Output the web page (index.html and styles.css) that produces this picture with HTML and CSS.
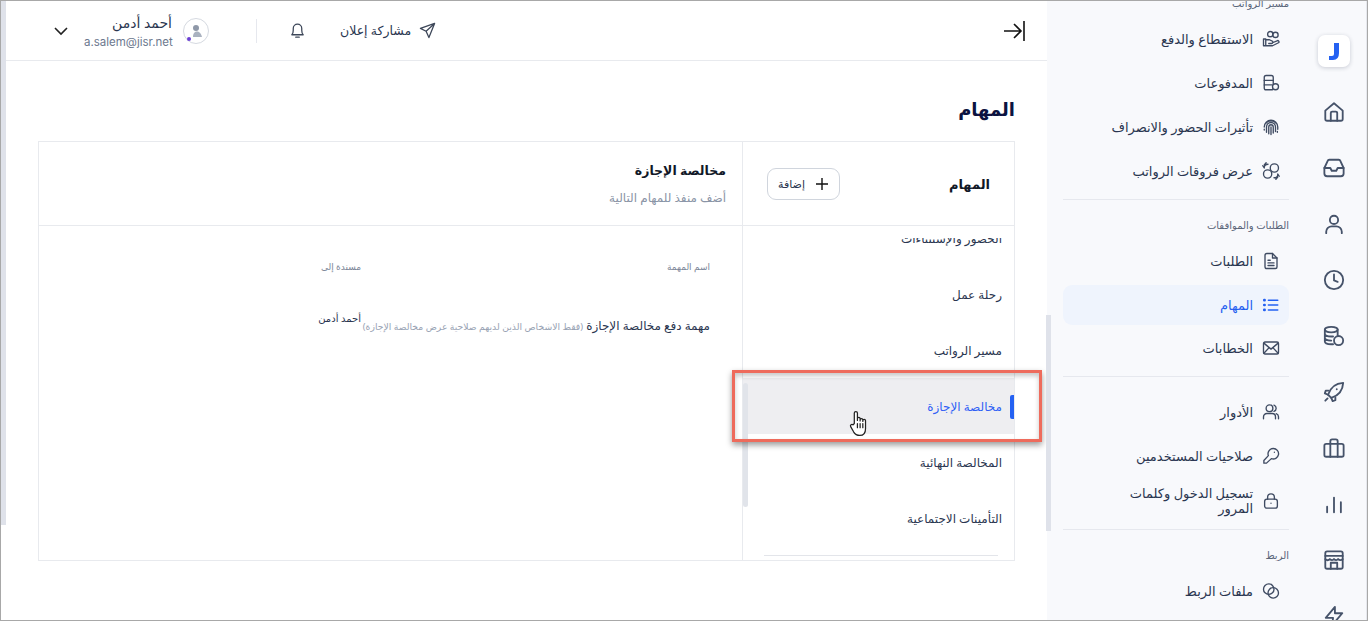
FILE: index.html
```html
<!DOCTYPE html>
<html lang="ar" dir="rtl">
<head>
  <meta charset="UTF-8" />
  <title>المهام</title>
  <link rel="stylesheet" href="styles.css">
</head>
<body>
  <div class="page">

    <!-- Icon rail -->
    <aside class="rail">
      <div class="logo">
        <svg width="10" height="17" viewBox="0 0 10 17"><path d="M5 0h5v10q0 7-6 7H0v-4h3q2 0 2-2z" fill="#2461f2"/></svg>
      </div>
      <svg class="rail-icon" viewBox="0 0 24 24"><path d="M2.500 10.500 12 2.500l9.500 8v9a2 2 0 0 1-2 2h-15a2 2 0 0 1-2-2z"/><path d="M8.500 21.500V13a1.500 1.500 0 0 1 1.500-1.500h4a1.500 1.500 0 0 1 1.500 1.500v8.500"/></svg>
      <svg class="rail-icon" viewBox="0 0 24 24"><path d="M1.500 12 5 4.500a2 2 0 0 1 2-1.500h10a2 2 0 0 1 2 1.500l3.500 7.500v6a3 3 0 0 1-3 3h-15a3 3 0 0 1-3-3z"/><path d="M1.500 12H8l1.500 3h5L16 12h6.500"/></svg>
      <svg class="rail-icon" viewBox="0 0 24 24"><circle cx="12" cy="7.500" r="4.500"/><path d="M3.500 22v-1.500a6 6 0 0 1 6-6h5a6 6 0 0 1 6 6V22"/></svg>
      <svg class="rail-icon" viewBox="0 0 24 24"><circle cx="12" cy="12" r="10"/><path d="M12 6v6.500l4 1.500"/></svg>
      <svg class="rail-icon" viewBox="0 0 24 24"><ellipse cx="9" cy="5" rx="7" ry="3"/><path d="M2 5v13c0 1.700 3 3 7 3h2M2 9.500c0 1.700 3 3 7 3h2M2 14c0 1.700 3 3 7 3M16 5v6"/><circle cx="17" cy="17" r="5"/></svg>
      <svg class="rail-icon" viewBox="0 0 24 24"><path d="M9 18.500 5.500 15c2-6 7-12.500 16.500-13-.5 9.500-7 14.500-13 16.500z"/><path d="M6 10.500H3l-1 3 3.500 1.500M13.500 18v3l-3 1-1.500-3.500M5 19l-2.500 2.500M15 9h.01"/></svg>
      <svg class="rail-icon" viewBox="0 0 24 24"><rect x="1.500" y="7.500" width="21" height="14" rx="2"/><path d="M8 21.500V4.500a2 2 0 0 1 2-2h4a2 2 0 0 1 2 2v17"/></svg>
      <svg class="rail-icon" viewBox="0 0 24 24"><path d="M4.500 15v6M12 5v16M19.500 10v11"/></svg>
      <svg class="rail-icon" viewBox="0 0 24 24"><rect x="2.500" y="2.500" width="19" height="19" rx="2"/><path d="M2.500 7.500h19M2.500 11c1.500 1.500 3.500 1.500 5 0 1.500 1.500 3.500 1.500 4.500 0 1.500 1.500 3.500 1.500 4.500 0 1.500 1.500 3.500 1.500 5 0M8.500 21.500V15h7v6.500"/></svg>
      <svg class="rail-icon" viewBox="0 0 24 24"><path d="M13 2 3 14h8l-1 8 11-13h-8z"/></svg>
    </aside>

    <!-- Section sidebar -->
    <nav class="sidebar">
      <div class="side-list">
        <div class="side-label">مسير الرواتب</div>
        <a class="side-item">
          <svg viewBox="0 0 24 24"><circle cx="11" cy="5.500" r="3.500"/><circle cx="18" cy="6.500" r="3.500"/><path d="M2 12h3v9H2zM5 13h5l4 2a1.800 1.800 0 0 1-1 3H9M14 17l6-2.500a1.600 1.600 0 0 1 2 2.500l-8 4H5"/></svg>
          <span>الاستقطاع والدفع</span>
        </a>
        <a class="side-item">
          <svg viewBox="0 0 24 24"><rect x="3" y="2" width="12" height="19" rx="2.500"/><path d="M3 8.500h12M3 14.500h10"/><circle cx="18" cy="17" r="4" fill="#f8f9fc"/></svg>
          <span>المدفوعات</span>
        </a>
        <a class="side-item">
          <svg viewBox="0 0 24 24"><path d="M5 7a9 9 0 0 1 14 0M3 12a9 9 0 0 1 18 0v3M6 19v-7a6 6 0 0 1 12 0v6M9 21v-9a3 3 0 0 1 6 0v8M12 12v10M3 15v1M20.500 18v1"/></svg>
          <span>تأثيرات الحضور والانصراف</span>
        </a>
        <a class="side-item">
          <svg viewBox="0 0 24 24"><circle cx="7.500" cy="16" r="5.500"/><circle cx="16.500" cy="8" r="5.500"/><path d="M3 7.500C3 4.500 5 3 8 3M5.500 1 3 4M1 5l2 3M21 16.500c0 3-2 4.500-5 4.500M18.500 23l2.500-3M23 19l-2-3"/></svg>
          <span>عرض فروقات الرواتب</span>
        </a>
        <div class="side-rule"></div>
        <div class="side-label">الطلبات والموافقات</div>
        <a class="side-item">
          <svg viewBox="0 0 24 24"><path d="M4 4.500A2.500 2.500 0 0 1 6.500 2H14l6 6v12a2 2 0 0 1-2 2H6.500A2.500 2.500 0 0 1 4 19.500z"/><path d="M14 2v6h6M8 11h3M8 14.500h8M8 18h8"/></svg>
          <span>الطلبات</span>
        </a>
        <a class="side-item active">
          <svg viewBox="0 0 24 24"><path d="M8.500 5.500H21M8.500 12H21M8.500 18.500H21"/><path class="dots" d="M3 5.500h.5M3 12h.5M3 18.500h.5"/></svg>
          <span>المهام</span>
        </a>
        <a class="side-item">
          <svg viewBox="0 0 24 24"><rect x="2" y="4" width="20" height="16" rx="2"/><path d="m2.500 5.500 9.500 8 9.500-8M2.500 19l7-7.500M21.500 19l-7-7.500"/></svg>
          <span>الخطابات</span>
        </a>
        <div class="side-rule"></div>
        <a class="side-item group-start">
          <svg viewBox="0 0 24 24"><circle cx="10" cy="7" r="4.500"/><path d="M2 21v-2.500A4.500 4.500 0 0 1 6.500 14h7a4.500 4.500 0 0 1 4.500 4.500V21M16 2.800a4.500 4.500 0 0 1 0 8.400M19 14.200a4.500 4.500 0 0 1 3 4.300V21"/></svg>
          <span>الأدوار</span>
        </a>
        <a class="side-item">
          <svg viewBox="0 0 24 24"><path d="M15 2a7 7 0 0 0-6.500 9.500L2.500 18v3.500H6l6.500-6A7 7 0 1 0 15 2z"/><path d="M16.500 7h.01"/></svg>
          <span>صلاحيات المستخدمين</span>
        </a>
        <a class="side-item two-line">
          <svg viewBox="0 0 24 24"><rect x="3.500" y="9.500" width="17" height="12" rx="3"/><path d="M7.500 9.500V7a4.500 4.500 0 0 1 9 0v2.500M12 15h.01"/></svg>
          <span>تسجيل الدخول وكلمات المرور</span>
        </a>
        <div class="side-rule"></div>
        <div class="side-label">الربط</div>
        <a class="side-item">
          <svg viewBox="0 0 24 24"><circle cx="9" cy="9.500" r="7"/><circle cx="15" cy="14.500" r="7"/></svg>
          <span>ملفات الربط</span>
        </a>
      </div>
    </nav>

    <!-- Main column -->
    <main class="main">
      <div class="main-scrollbar"></div>
      <header class="topbar">
        <svg class="collapse" width="22" height="22" viewBox="0 0 22 22"><path d="M1 11h16M11 4l7 7-7 7M21 1v20"/></svg>
        <div class="top-actions">
          <a class="share">
            <svg width="17" height="17" viewBox="0 0 24 24"><path d="M22 2 2 9l8 4 4 9zM22 2 10 13"/></svg>
            <span>مشاركة إعلان</span>
          </a>
          <svg class="bell" width="17" height="17" viewBox="0 0 24 24"><path d="M4 18c1.500-1.500 2-3 2-6.500V9a6 6 0 0 1 12 0v2.500c0 3.500.5 5 2 6.500zM9.500 21.500h5"/></svg>
          <div class="top-rule"></div>
          <div class="avatar">
            <svg width="26" height="26" viewBox="0 0 26 26"><circle cx="13" cy="13" r="12.500" fill="#fff" stroke="#d5d9e0"/><circle cx="13" cy="10" r="3" fill="#8f98a8"/><path d="M10 19c0-4 2-5.500 4-5.500s4 1.500 5 5.500z" fill="#aab2c0"/><circle cx="6" cy="21" r="2" fill="#6b3fd4"/></svg>
          </div>
          <div class="user">
            <div class="user-name">أحمد أدمن</div>
            <div class="user-mail">a.salem@jisr.net</div>
          </div>
          <svg class="chev" width="16" height="16" viewBox="0 0 16 16"><path d="m2 5 6 6 6-6"/></svg>
        </div>
      </header>

      <div class="content">
        <h1>المهام</h1>
        <section class="card">
          <div class="tasks-col">
            <div class="tasks-head">
              <h2>المهام</h2>
              <button class="add-btn">
                <svg width="14" height="14" viewBox="0 0 14 14"><path d="M7 1v12M1 7h12"/></svg>
                <span>إضافة</span>
              </button>
            </div>
            <div class="tasks-body">
              <ul class="tasks-list">
                <li>الحضور والإستثناءات</li>
                <li>رحلة عمل</li>
                <li>مسير الرواتب</li>
                <li class="selected">مخالصة الإجازة</li>
                <li>المخالصة النهائية</li>
                <li>التأمينات الاجتماعية</li>
              </ul>
              <div class="tasks-rule"></div>
            </div>
            <div class="list-scrollbar"></div>
          </div>

          <div class="detail-col">
            <div class="detail-head">
              <h3>مخالصة الإجازة</h3>
              <p>أضف منفذ للمهام التالية</p>
            </div>
            <div class="detail-table">
              <div class="th">اسم المهمة</div>
              <div class="th">مسندة إلى</div>
              <div class="td-task">مهمة دفع مخالصة الإجازة <small>(فقط الاشخاص الذين لديهم صلاحية عرض مخالصة الإجازة)</small></div>
              <div class="td-user">أحمد أدمن</div>
            </div>
          </div>
        </section>
      </div>
    </main>

    <!-- Annotation and pointer drawn over the capture -->
    <div class="callout"></div>
    <svg class="hand" width="21" height="27" viewBox="0 0 20 26"><path d="M5 13V3a1.500 1.500 0 0 1 3 0v7V8.500a1.300 1.300 0 0 1 2.600 0v2-1a1.300 1.300 0 0 1 2.600 0v1.500-.7a1.300 1.300 0 0 1 2.600 0V18c0 4-2 6.500-5.500 6.500-3 0-4.500-1-6-3.500L1.500 16c-.8-1.500 1-3 2.300-1.700z"/><path d="M8 13v4M10.600 13v4M13.200 13v4"/></svg>
  </div>
</body>
</html>
```

FILE: styles.css
```css
* {
  box-sizing: border-box;
}

body {
  margin: 0;
  font-family: "Noto Sans", "DejaVu Sans", sans-serif;
  color: #1f2a44;
}

.page {
  position: relative;
  display: flex;
  width: 1368px;
  height: 621px;
  overflow: hidden;
  border: 1px solid #a8a8a8;
  background: #fff;
}

/* Rail */
.rail {
  flex: 0 0 66px;
  display: flex;
  flex-direction: column;
  align-items: center;
  padding-top: 34px;
  gap: 32px;
  background: #f8f9fc;
  border-right: 1px solid #e6e8ee;
  overflow: hidden;
}

.logo {
  flex: 0 0 32px;
  width: 32px;
  margin-bottom: 1px;
  display: flex;
  align-items: center;
  justify-content: center;
  background: #fff;
  border-radius: 7px;
  box-shadow: 0 1px 4px rgba(30, 40, 70, 0.22);
}

.rail-icon {
  flex: 0 0 24px;
  width: 22px;
  height: 24px;
  fill: none;
  stroke: #46536a;
  stroke-width: 2;
  stroke-linecap: round;
  stroke-linejoin: round;
}

/* Sidebar */
.sidebar {
  flex: 0 0 254px;
  background: #f8f9fc;
  overflow: hidden;
}

.side-list {
  margin-top: -8px;
  padding: 0 12px 0 16px;
}

.side-label {
  height: 20px;
  margin-bottom: 6px;
  line-height: 20px;
  font-size: 10px;
  color: #5b667a;
}

.side-item {
  display: flex;
  align-items: center;
  gap: 9px;
  height: 40px;
  margin-bottom: 4px;
  padding: 0 9px;
  border-radius: 9px;
  font-size: 13px;
  line-height: 15px;
  color: #2a3650;
}

.side-item svg {
  flex: 0 0 18px;
  width: 18px;
  height: 18px;
  fill: none;
  stroke: #3f4b62;
  stroke-width: 1.800;
  stroke-linecap: round;
  stroke-linejoin: round;
}

.side-item.active {
  margin-top: 3px;
  margin-bottom: 3px;
  background: #eff4fd;
  color: #1f5ff0;
}

.side-item.active svg {
  stroke: #2461f2;
  stroke-width: 2;
}

.side-item.active .dots {
  stroke-width: 3.500;
}

.group-start {
  margin-top: 2px;
}

.two-line {
  margin-top: 5px;
  margin-bottom: 1px;
}

.two-line span {
  max-width: 130px;
}

.side-rule {
  height: 1px;
  margin: 8px 0 15px;
  background: #e6e8ee;
}

/* Main */
.main {
  position: relative;
  flex: 1;
  min-width: 0;
}

.main-scrollbar {
  position: absolute;
  top: 0;
  left: 0;
  width: 5px;
  height: 524px;
  background: #dfe2ea;
}

.topbar {
  display: flex;
  align-items: center;
  justify-content: space-between;
  height: 60px;
  margin-left: 5px;
  padding: 0 22px 0 47px;
  border-bottom: 1px solid #e8eaee;
}

.collapse {
  fill: none;
  stroke: #111;
  stroke-width: 1.600;
}

.top-actions {
  display: flex;
  align-items: center;
}

.share {
  display: flex;
  align-items: center;
  gap: 8px;
  font-size: 12.500px;
  color: #2a3650;
}

.share svg,
.bell {
  fill: none;
  stroke: #3d4759;
  stroke-width: 1.800;
  stroke-linejoin: round;
  stroke-linecap: round;
}

.bell {
  margin: 0 34px 0 32px;
}

.top-rule {
  width: 1px;
  height: 24px;
  background: #e6e8ee;
  margin-left: 47px;
}

.avatar {
  display: flex;
  margin-left: 11px;
}

.user {
  width: 88px;
  margin-top: 2px;
  margin-left: 15px;
}

.user-name {
  font-size: 14px;
  line-height: 20px;
  color: #2a3650;
}

.user-mail {
  direction: ltr;
  text-align: right;
  font-family: "Inter", "Noto Sans", sans-serif;
  font-size: 11.500px;
  line-height: 18px;
  color: #6c788e;
}

.chev {
  fill: none;
  stroke: #222;
  stroke-width: 1.600;
}

.content {
  padding: 34px 32px 0 37px;
}

h1 {
  height: 29px;
  margin: 0 0 17px;
  font-size: 18px;
  line-height: 29px;
  color: #0b1340;
}

.card {
  display: flex;
  height: 420px;
  border: 1px solid #e8eaee;
}

.tasks-col {
  position: relative;
  flex: 0 0 272px;
  border-left: 1px solid #e8eaee;
}

.tasks-head {
  display: flex;
  align-items: center;
  justify-content: space-between;
  height: 84px;
  padding: 0 24px 0 24px;
  border-bottom: 1px solid #e8eaee;
}

h2 {
  margin: 0;
  font-size: 13px;
  color: #111827;
}

.add-btn {
  display: flex;
  flex: 0 0 73px;
  align-items: center;
  justify-content: center;
  gap: 10px;
  height: 32px;
  padding: 0;
  background: #fff;
  border: 1px solid #d0d5dd;
  border-radius: 9px;
  font-family: inherit;
  font-size: 11px;
  color: #2a3650;
}

.add-btn svg {
  fill: none;
  stroke: #111;
  stroke-width: 1.400;
}

.tasks-body {
  padding-top: 12px;
}

.tasks-list {
  height: 308px;
  margin: 0;
  padding: 0;
  overflow: hidden;
  list-style: none;
}

.tasks-list li {
  display: flex;
  align-items: center;
  height: 56px;
  padding-right: 12px;
  font-size: 12px;
  color: #2a3650;
}

.tasks-list li:first-child {
  margin-top: -28px;
}

.tasks-list li.selected {
  position: relative;
  background: #eeeef1;
  color: #2f5ff5;
}

.tasks-list li.selected::before {
  content: "";
  position: absolute;
  top: 17px;
  right: 0;
  width: 4px;
  height: 24px;
  border-radius: 2px 0 0 2px;
  background: #2461f2;
}

.tasks-rule {
  height: 1px;
  margin: 9px 16px 0 21px;
  background: #e3e5ea;
}

.list-scrollbar {
  position: absolute;
  top: 241px;
  left: 0;
  width: 5px;
  height: 124px;
  border-radius: 3px;
  background: #e1e4ea;
}

.detail-col {
  flex: 1;
  min-width: 0;
}

.detail-head {
  height: 84px;
  padding: 18px 16px 0 0;
  border-bottom: 1px solid #e8eaee;
}

h3 {
  margin: 0 0 6px;
  font-size: 12.500px;
  line-height: 22px;
  color: #111827;
}

.detail-head p {
  margin: 0;
  font-size: 12px;
  line-height: 20px;
  color: #8a94a6;
}

.detail-table {
  display: grid;
  grid-template-columns: 349px 1fr;
  grid-template-rows: 30px auto;
  padding: 26px 32px 0 0;
  row-gap: 34px;
}

.th {
  font-size: 9px;
  line-height: 30px;
  color: #7c8698;
}

.td-task {
  white-space: nowrap;
  font-size: 12px;
  line-height: 20px;
  color: #2a3650;
}

.td-task small {
  font-size: 9.250px;
  color: #98a2b3;
}

.td-user {
  margin-top: -8px;
  font-size: 10px;
  line-height: 20px;
  color: #2a3650;
}

/* Overlays */
.callout,
.hand {
  position: absolute;
}

.callout {
  top: 369px;
  left: 731px;
  width: 310px;
  height: 72px;
  border: 3px solid #ee6b5c;
  box-shadow: 0 3px 6px rgba(0, 0, 0, 0.4), inset 0 3px 5px rgba(0, 0, 0, 0.22);
}

.hand {
  top: 409px;
  left: 848px;
  fill: #fff;
  stroke: #222;
  stroke-width: 1.200;
  stroke-linejoin: round;
  stroke-linecap: round;
}

/* Scrollbar on the sidebar's edge */
.page::after {
  content: "";
  position: absolute;
  top: 314px;
  left: 1045px;
  width: 5px;
  height: 216px;
  background: #dfe2ea;
}
```
